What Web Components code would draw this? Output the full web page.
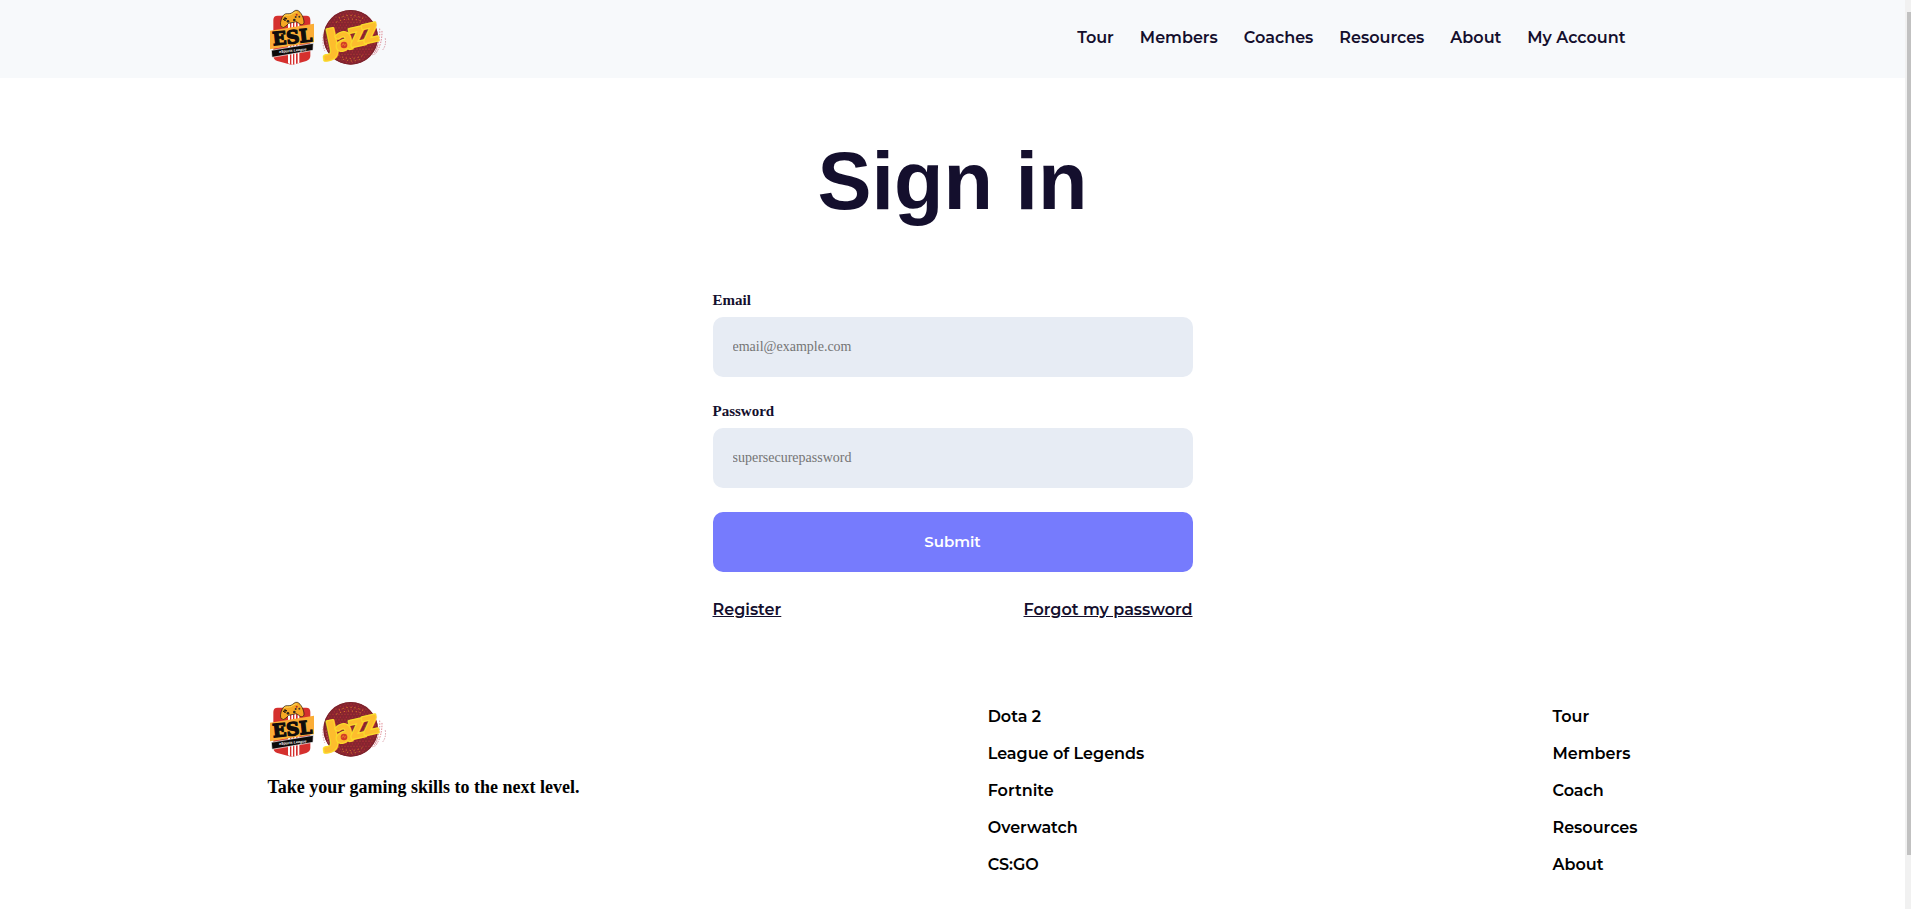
<!DOCTYPE html>
<html lang="en">
<head>
<meta charset="utf-8">
<title>ESL Jazz - Sign in</title>
<style>
  html, body { height: 100%; margin: 0; }
  body {
    --dark: #140f2d;
    --sans: Montserrat, Inter, "Open Sans", sans-serif;
    font-family: "Liberation Serif", serif;
    color: var(--dark);
    background: #fff;
  }
</style>
</head>
<body>
<app-page>
  <site-header></site-header>
  <sign-in-form></sign-in-form>
  <site-footer></site-footer>
</app-page>

<script>
class AppPage extends HTMLElement {
  constructor() {
    super();
    this.attachShadow({ mode: "open" });
    this.shadowRoot.innerHTML = `
      <style>
        :host { display: flex; height: 100vh; overflow: hidden; }
        .content { flex: 1; min-width: 0; overflow-y: auto; scrollbar-width: none; }
        /* thin rail on the right edge */
        .rail {
          display: flex;
          flex-direction: column;
          align-items: flex-end;
          box-sizing: border-box;
          width: 6px;
          padding: 12px 0 54px;
          background: #f1f1f1;
        }
        .thumb { flex: 1; width: 4px; background: #c1c1c1; }
      </style>
      <div class="content"><slot></slot></div>
      <div class="rail" aria-hidden="true"><div class="thumb"></div></div>
    `;
  }
}

class EslLogo extends HTMLElement {
  constructor() {
    super();
    this.attachShadow({ mode: "open" });
    this.shadowRoot.innerHTML = `
      <style>
        :host { display: block; width: 120px; height: 60px; }
        svg { display: block; width: 100%; height: 100%; overflow: visible; }
      </style>
      <svg viewBox="24 24 360 180" role="img" aria-label="ESL eSports League and Jazz">
        <defs>
          <pattern id="dots" width="18" height="16" patternUnits="userSpaceOnUse">
            <rect width="18" height="16" fill="#86242f"/>
            <circle cx="3" cy="3" r="2" fill="#c4313a"/>
            <circle cx="12" cy="3" r="1.6" fill="#b5542d"/>
            <circle cx="7" cy="11" r="2" fill="#b92c37"/>
            <circle cx="16" cy="11" r="1.8" fill="#a92a35"/>
          </pattern>
        </defs>

        <!-- shield -->
        <path d="M53 47H139Q151 47 151 60V168Q151 178 139 183L96 195L52 183Q40 179 40 168V60Q40 47 53 47Z" fill="#d5302e"/>
        <path d="M84 60H90V192L84 190ZM94 60H99V194H94ZM103 60H108V192L103 193ZM113 60H118V189L113 190Z" fill="#fff"/>
        <!-- gamepad -->
        <path d="M64 80C58 72 64 53 71 45C77 38 86 43 93 40C100 37 104 29 112 31C124 35 132 56 132 67C131 76 123 76 117 70L109 65L86 70L78 78Q70 86 64 80Z" fill="#f6a823" stroke="#17120f" stroke-width="2"/>
        <path d="M72 48C78 43 83 47 92 44C100 40 104 36 111 36" fill="none" stroke="#ffdb5c" stroke-width="3"/>
        <path d="M75 52V63M69 58L81 56" stroke="#17120f" stroke-width="4"/>
        <circle cx="84" cy="64" r="4" fill="#312822"/>
        <circle cx="103" cy="60" r="4" fill="#312822"/>
        <circle cx="110" cy="44" r="3" fill="#b62925"/>
        <circle cx="118" cy="50" r="3" fill="#3d302a"/>
        <circle cx="107" cy="51" r="3" fill="#3d302a"/>
        <!-- bands -->
        <path d="M30 92L162 71V127L30 148Z" fill="#fbad36"/>
        <path d="M34 151L160 130L159 151L36 172Z" fill="#0b090a" stroke="#fff" stroke-width="2"/>
        <g transform="rotate(-6 96 112)" text-anchor="middle">
          <text x="97" y="130" font-family="DejaVu Serif, serif" font-weight="700" font-size="54" fill="#100d0d" stroke="#100d0d" stroke-width="4">ESL</text>
          <text x="94" y="155" font-family="Liberation Sans, sans-serif" font-style="italic" font-weight="700" font-size="11" fill="#fff">eSports League</text>
        </g>

        <!-- jazz disc -->
        <circle cx="272" cy="112" r="82" fill="url(#dots)"/>
        <circle cx="272" cy="112" r="80" fill="none" stroke="#79232c" stroke-width="3"/>
        <g fill="none" stroke-linecap="round">
          <g stroke-dasharray="1 11" stroke-width="3">
            <path d="M238 54Q272 36 314 58M230 66Q270 48 310 66" stroke="#e98b29"/>
            <path d="M236 166Q270 186 314 164M250 178Q276 188 300 178" stroke="#d9802c"/>
          </g>
          <g stroke-dasharray="2 6" stroke-width="2">
            <path d="M359 87Q362 132 338 165M366 94Q366 132 349 158" stroke="#cf4655"/>
            <path d="M376 116Q379 137 367 151M353 138L344 164" stroke="#c66b79"/>
            <path d="M190 104Q186 130 194 152M198 117L205 154" stroke="#c96b75"/>
          </g>
        </g>
        <g transform="rotate(-12 270 115)" font-family="Lato, sans-serif" font-weight="900" stroke-linejoin="round" stroke-width="8" fill="#fdbd2d" stroke="#fada2c" paint-order="stroke">
          <text><tspan x="181" y="165" font-size="124">J</tspan><tspan x="224" y="146" font-size="100">a</tspan><tspan x="268" y="141" font-size="104">z</tspan><tspan x="309" y="138" font-size="104">z</tspan></text>
        </g>
        <circle cx="252" cy="135" r="10" fill="#d43a27"/>
        <path d="M246 137L250 131L254 137L259 132" fill="none" stroke="#f5a32b" stroke-width="2"/>
      </svg>
    `;
  }
}

class SiteHeader extends HTMLElement {
  constructor() {
    super();
    this.attachShadow({ mode: "open" });
    this.shadowRoot.innerHTML = `
      <style>
        :host { display: block; background: #f7f9fb; }
        header {
          display: flex;
          justify-content: space-between;
          align-items: flex-start;
          box-sizing: border-box;
          max-width: 1370px;
          margin: 0 auto;
          padding: 8px 0 10px;
        }
        nav { display: flex; gap: 26px; padding: 18px 12px 0 0; }
        a {
          color: var(--dark);
          font: 600 16px/24px var(--sans);
          text-decoration: none;
        }
      </style>
      <header>
        <esl-logo></esl-logo>
        <nav>
          <a href="#tour">Tour</a>
          <a href="#members">Members</a>
          <a href="#coaches">Coaches</a>
          <a href="#resources">Resources</a>
          <a href="#about">About</a>
          <a href="#account">My Account</a>
        </nav>
      </header>
    `;
  }
}

class SignInForm extends HTMLElement {
  constructor() {
    super();
    this.attachShadow({ mode: "open" });
  }

  connectedCallback() {
    this.render();
    this.shadowRoot.querySelector("form").addEventListener("submit", (e) => e.preventDefault());
  }

  render() {
    this.shadowRoot.innerHTML = `
      <style>
        :host { display: block; padding: 55px 0 76px; }
        h1 {
          margin: 0 0 61px;
          font: 700 81px/96px "Liberation Sans", sans-serif;
          text-align: center;
        }
        form {
          display: flex;
          flex-direction: column;
          gap: 24px;
          max-width: 480px;
          margin: 0 auto;
        }
        .field { display: flex; flex-direction: column; gap: 6px; }
        label { font-size: 15px; line-height: 21px; font-weight: 700; }
        input, button {
          box-sizing: border-box;
          width: 100%;
          height: 60px;
          border: 0;
          border-radius: 10px;
        }
        input {
          padding: 0 20px;
          background: #e7ecf4;
          color: var(--dark);
          font: 14px "Liberation Serif", serif;
        }
        input::placeholder { color: #757575; }
        button {
          padding: 0 0 2px;
          background: #767bfd;
          color: #fff;
          font: 600 15px var(--sans);
          cursor: pointer;
        }
        .links { display: flex; justify-content: space-between; }
        .links a { color: var(--dark); font: 600 16px/28px var(--sans); }
      </style>
      <h1>Sign in</h1>
      <form>
        <div class="field">
          <label for="email">Email</label>
          <input id="email" type="email" placeholder="email@example.com">
        </div>
        <div class="field">
          <label for="password">Password</label>
          <input id="password" type="password" placeholder="supersecurepassword">
        </div>
        <button type="submit">Submit</button>
        <div class="links">
          <a href="#register">Register</a>
          <a href="#forgot">Forgot my password</a>
        </div>
      </form>
    `;
  }
}

class SiteFooter extends HTMLElement {
  constructor() {
    super();
    this.attachShadow({ mode: "open" });
    this.shadowRoot.innerHTML = `
      <style>
        :host { display: block; color: #000; }
        footer {
          display: flex;
          justify-content: space-between;
          max-width: 1370px;
          margin: 0 auto;
          padding-bottom: 80px;
        }
        p { margin: 17px 0 0; font-size: 18px; line-height: 20px; font-weight: 700; }
        ul { margin: 0; padding: 5px 0 0; list-style: none; }
        li { height: 37px; }
        a { color: #000; font: 600 16px/24px var(--sans); text-decoration: none; }
      </style>
      <footer>
        <div>
          <esl-logo></esl-logo>
          <p>Take your gaming skills to the next level.</p>
        </div>
        <ul>
          <li><a href="#dota">Dota 2</a></li>
          <li><a href="#lol">League of Legends</a></li>
          <li><a href="#fortnite">Fortnite</a></li>
          <li><a href="#overwatch">Overwatch</a></li>
          <li><a href="#csgo">CS:GO</a></li>
        </ul>
        <ul>
          <li><a href="#tour">Tour</a></li>
          <li><a href="#members">Members</a></li>
          <li><a href="#coach">Coach</a></li>
          <li><a href="#resources">Resources</a></li>
          <li><a href="#about">About</a></li>
        </ul>
      </footer>
    `;
  }
}

customElements.define("esl-logo", EslLogo);
customElements.define("app-page", AppPage);
customElements.define("site-header", SiteHeader);
customElements.define("sign-in-form", SignInForm);
customElements.define("site-footer", SiteFooter);
</script>
</body>
</html>
